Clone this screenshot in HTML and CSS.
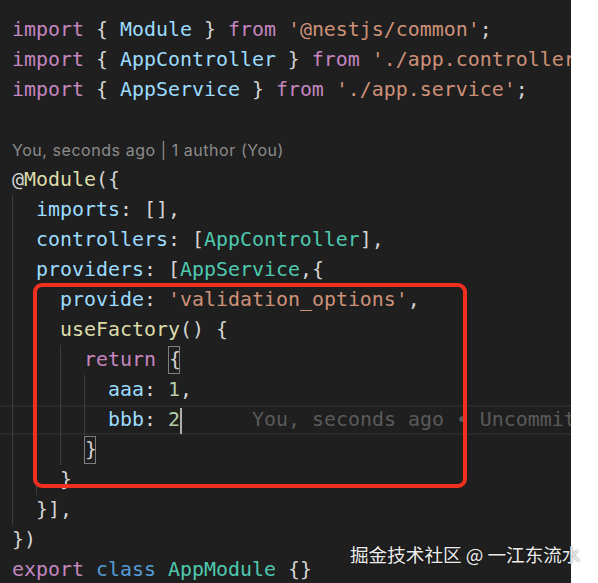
FILE: index.html
```html
<!DOCTYPE html>
<html>
<head>
<meta charset="utf-8">
<link rel="stylesheet" href="styles.css">
</head>
<body>
<div class="page">
<div class="editor">
  <div class="code">
    <div class="line"><span class="kw">import</span> { <span class="var">Module</span> } <span class="kw">from</span> <span class="str">'@nestjs/common'</span>;</div>
    <div class="line"><span class="kw">import</span> { <span class="var">AppController</span> } <span class="kw">from</span> <span class="str">'./app.controller'</span>;</div>
    <div class="line"><span class="kw">import</span> { <span class="var">AppService</span> } <span class="kw">from</span> <span class="str">'./app.service'</span>;</div>
    <div class="line"></div>
    <div class="line lens">You, seconds ago | 1 author (You)</div>
    <div class="line">@<span class="fn">Module</span>({</div>
    <div class="line"><span class="i g"></span><span class="var">imports</span>: [],</div>
    <div class="line"><span class="i g"></span><span class="var">controllers</span>: [<span class="cls">AppController</span>],</div>
    <div class="line"><span class="i g"></span><span class="var">providers</span>: [<span class="cls">AppService</span>,{</div>
    <div class="line"><span class="i g"></span><span class="i g"></span><span class="var">provide</span>: <span class="str">'validation_options'</span>,</div>
    <div class="line"><span class="i g"></span><span class="i g"></span><span class="fn">useFactory</span>() {</div>
    <div class="line"><span class="i g"></span><span class="i g"></span><span class="i g"></span><span class="kw">return</span> <span class="match">{</span></div>
    <div class="line"><span class="i g"></span><span class="i g"></span><span class="i g"></span><span class="i g"></span><span class="var">aaa</span>: <span class="num">1</span>,</div>
    <div class="line cur"><span class="i g"></span><span class="i g"></span><span class="i g"></span><span class="i g"></span><span class="var">bbb</span>: <span class="num">2</span><span class="caret"></span><span class="ghost">You, seconds ago • Uncommitted changes</span></div>
    <div class="line"><span class="i g"></span><span class="i g"></span><span class="i g"></span><span class="match">}</span></div>
    <div class="line"><span class="i g"></span><span class="i g"></span>}</div>
    <div class="line"><span class="i g"></span>}],</div>
    <div class="line">})</div>
    <div class="line"><span class="kw">export</span> <span class="kw2">class</span> <span class="cls">AppModule</span> {}</div>
  </div>
  <div class="redbox"></div>
</div>
<div class="watermark">掘金技术社区 @ 一江东流水</div>
</div>
</body>
</html>
```
FILE: styles.css
```css
html, body {
  margin: 0;
  padding: 0;
  background: #ffffff;
}
.page {
  position: relative;
  width: 598px;
  height: 583px;
  overflow: hidden;
}
.editor {
  position: relative;
  width: 571px;
  height: 583px;
  overflow: hidden;
  background: #1f1f1f;
}
.code {
  padding-top: 15px;
  font-family: "DejaVu Sans Mono", "Liberation Mono", monospace;
  font-size: 19.93px;
  color: #d4d4d4;
}
.line {
  height: 30px;
  line-height: 30px;
  padding-left: 12px;
  white-space: pre;
}
.lens {
  font-family: Inter, "Liberation Sans", Arial, sans-serif;
  font-size: 16px;
  letter-spacing: 0.55px;
  color: #8c8c8c;
}
.i {
  display: inline-block;
  width: 24px;
  height: 30px;
  vertical-align: top;
  box-sizing: border-box;
}
.g { border-left: 1px solid #3d3d3d; }
.kw { color: #c586c0; }
.kw2 { color: #569cd6; }
.var { color: #9cdcfe; }
.str { color: #ce9178; }
.fn { color: #dcdcaa; }
.cls { color: #4ec9b0; }
.num { color: #b5cea8; }
.match {
  display: inline-block;
  width: 12px;
  box-sizing: border-box;
  border: 1px solid #7e7e7e;
  line-height: 26px;
}
.cur {
  box-shadow: inset 0 2px 0 #2a2a2a, inset 0 -2px 0 #2a2a2a;
}
.caret {
  display: inline-block;
  width: 0;
  height: 26px;
  vertical-align: middle;
  border-left: 2px solid #aeafad;
  margin-right: -2px;
}
.ghost {
  margin-left: 72px;
  color: #5a5a5a;
}
.redbox {
  position: absolute;
  left: 33px;
  top: 283px;
  width: 434px;
  height: 205px;
  box-sizing: border-box;
  border: 4px solid #f2301f;
  border-radius: 9px;
}
.watermark {
  position: absolute;
  left: 350px;
  top: 541px;
  font-family: "Noto Sans CJK SC", sans-serif;
  font-size: 18.6px;
  line-height: 26px;
  color: #ededed;
  white-space: nowrap;
  text-shadow: 0 0 2px rgba(0,0,0,0.6);
}
```
